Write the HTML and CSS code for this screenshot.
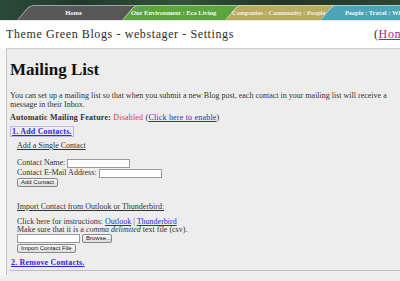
FILE: index.html
```html
<!DOCTYPE html>
<html lang="en">
<head>
    <meta charset="UTF-8">
    <title>Settings</title>
    <link rel="stylesheet" href="styles.css">
</head>
<body>
    <div class="banner">
        <div class="tabs">
            <a class="tab tab-home" href="#">Home</a>
            <a class="tab tab-green" href="#">Our Environment : Eco Living</a>
            <a class="tab tab-khaki" href="#">Companies : Community : People</a>
            <a class="tab tab-teal" href="#">People : Travel : Wildlife</a>
        </div>
    </div>
    <div class="titlebar">
        <span class="title">Theme Green Blogs - webstager - Settings</span>
        <span class="home">(<a href="#">Home</a>)</span>
    </div>
    <div class="content">
        <h1>Mailing List</h1>
        <p class="intro">You can set up a mailing list so that when you submit a new Blog post, each contact in your mailing list will receive a message in their Inbox.</p>
        <p class="feature"><b>Automatic Mailing Feature:</b> <span class="disabled">Disabled</span> (<a href="#">Click here to enable</a>)</p>

        <a class="section-link" href="#">1. Add Contacts.</a>
        <div class="section">
            <div class="sub-title">Add a Single Contact</div>
            <div class="form-row">Contact Name: <input type="text" class="field name-field"></div>
            <div class="form-row">Contact E-Mail Address: <input type="text" class="field mail-field"></div>
            <button type="button" class="btn">Add Contact</button>

            <div class="sub-title import-title">Import Contact from Outlook or Thunderbird:</div>
            <div class="line">Click here for instructions: <a href="#">Outlook</a> | <a href="#">Thunderbird</a></div>
            <div class="line">Make sure that it is a <i>comma delimited</i> text file (csv).</div>
            <div class="file-row"><input type="text" class="field file-field"><button type="button" class="btn">Browse...</button></div>
            <button type="button" class="btn">Import Contact File</button>
        </div>

        <a class="section-link remove-link" href="#">2. Remove Contacts.</a>
        <div class="rule"></div>
    </div>
    <div class="footer"></div>
</body>
</html>
```

FILE: styles.css
```css
* {
  box-sizing: border-box;
}

body {
  margin: 0;
  background: #f6f6f6;
  font-family: 'Liberation Serif', serif;
  color: #333;
  overflow: hidden;
}

a {
  color: #2a2ae0;
}

.banner {
  height: 20px;
  background: linear-gradient(to right, #2c4a38, #1f3a2c 20%, #33523c 45%, #203526 70%, #2e4632);
  overflow: hidden;
}

.tabs {
  display: flex;
  padding: 5px 0 0 17px;
}

.tab {
  position: relative;
  flex-shrink: 0;
  height: 15px;
  line-height: 15px;
  font-size: 6.5px;
  font-weight: bold;
  color: #f4f4f4;
  text-decoration: none;
  white-space: nowrap;
  z-index: 0;
}

.tab::before {
  content: "";
  position: absolute;
  top: 0;
  bottom: 0;
  left: 0;
  right: -20px;
  transform: skewX(-40deg);
  transform-origin: bottom left;
  border-radius: 5px 0 0 0;
  border-top: 1px solid rgba(255, 255, 255, 0.45);
  border-left: 1px solid rgba(255, 255, 255, 0.75);
  z-index: -1;
}

.tab-home {
  width: 105px;
  padding-left: 8px;
  text-align: center;
}
.tab-home::before { background: #585858; }

.tab-green {
  width: 103px;
  padding-left: 9px;
}
.tab-green::before { background: #5ba43e; }

.tab-khaki {
  width: 95px;
  padding-left: 7px;
  color: #eeeeea;
}
.tab-khaki::before { background: #b8ab5e; }

.tab-teal {
  width: 120px;
  padding-left: 25px;
}
.tab-teal::before { background: #4aa6b6; right: -200px; }

.titlebar {
  display: flex;
  justify-content: space-between;
  align-items: center;
  height: 28px;
  border-top: 1px solid #e8e8e8;
  background: #fff;
  padding: 0 0 0 6px;
}

.title {
  font-size: 12px;
  letter-spacing: 0.6px;
  color: #2b2b2b;
}

.home {
  font-size: 12px;
  color: #333;
  width: 26px;
  letter-spacing: 0.6px;
  white-space: nowrap;
}

.home a {
  color: #9a2a9a;
}

.content {
  margin-left: 6px;
  border-left: 1px solid #c4c4c4;
  border-top: 1px solid #cfcfcf;
  background: #ededed;
  padding: 1px 0 0 3px;
  font-size: 8px;
  line-height: 9px;
  color: #333;
  height: 227px;
}

h1 {
  margin: 9px 0 10px 0;
  font-size: 17px;
  line-height: 22px;
  color: #111;
}

.intro {
  margin: 0;
  width: 392px;
}

.feature {
  margin: 4px 0 4px 0;
  letter-spacing: 0.2px;
}

.disabled {
  color: #e23a3a;
}

.section-link {
  display: inline-block;
  font-weight: bold;
  border: 1px solid #b8b8e8;
  padding: 0 1px;
  line-height: 9px;
  letter-spacing: 0.2px;
}

.section {
  padding: 4px 0 2px 7px;
}

.sub-title {
  text-decoration: underline;
  margin-bottom: 8px;
}

.form-row {
  height: 10px;
  line-height: 10px;
  display: flex;
  align-items: center;
  gap: 2px;
}

.field {
  height: 9px;
  border: 1px solid #999;
  background: #fff;
  padding: 0;
  margin: 0;
}

.name-field { width: 63px; }
.mail-field { width: 63px; }
.file-field { width: 63px; }

.btn {
  display: block;
  height: 9px;
  padding: 0 3px;
  font-family: 'Liberation Sans', sans-serif;
  font-size: 6px;
  line-height: 7px;
  color: #222;
  border: 1px solid #888;
  border-radius: 2px;
  background: linear-gradient(#fafafa, #dcdcdc);
  margin: 0;
}

.import-title {
  margin-top: 15px;
  margin-bottom: 7px;
}

.line {
  line-height: 8px;
}

.file-row {
  display: flex;
  gap: 2px;
  height: 9px;
  margin: 0 0 1px 0;
}

.file-row .btn {
  width: 30px;
}

.remove-link {
  border: none;
  margin-top: 3px;
}

.rule {
  margin: 3px 0 0 0;
  border-top: 1px solid #bdbdbd;
}

.footer {
  height: 10px;
  background: linear-gradient(#f2f2f2, #e6e6e6);
}
```
